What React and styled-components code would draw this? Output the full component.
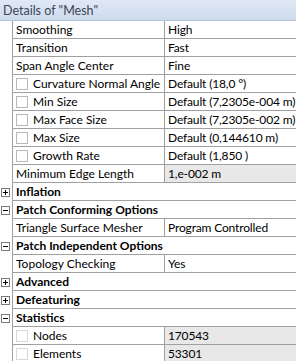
import React from 'react';
import styled, { createGlobalStyle } from 'styled-components';

const GlobalStyle = createGlobalStyle`
    body {
        margin: 0;
        background: #ffffff;
        font-family: Lato, "Noto Sans", sans-serif;
    }
`;

const rows = [
    { type: 'prop', label: 'Smoothing', value: 'High' },
    { type: 'prop', label: 'Transition', value: 'Fast' },
    { type: 'prop', label: 'Span Angle Center', value: 'Fine' },
    { type: 'prop', label: 'Curvature Normal Angle', value: 'Default (18,0 °)', check: true },
    { type: 'prop', label: 'Min Size', value: 'Default (7,2305e-004 m)', check: true },
    { type: 'prop', label: 'Max Face Size', value: 'Default (7,2305e-002 m)', check: true },
    { type: 'prop', label: 'Max Size', value: 'Default (0,144610 m)', check: true },
    { type: 'prop', label: 'Growth Rate', value: 'Default (1,850 )', check: true },
    { type: 'prop', label: 'Minimum Edge Length', value: '1,e-002 m', readOnly: true },
    { type: 'group', label: 'Inflation', open: false },
    { type: 'group', label: 'Patch Conforming Options', open: true },
    { type: 'prop', label: 'Triangle Surface Mesher', value: 'Program Controlled' },
    { type: 'group', label: 'Patch Independent Options', open: true },
    { type: 'prop', label: 'Topology Checking', value: 'Yes' },
    { type: 'group', label: 'Advanced', open: false },
    { type: 'group', label: 'Defeaturing', open: false },
    { type: 'group', label: 'Statistics', open: true },
    { type: 'prop', label: 'Nodes', value: '170543', check: true, readOnly: true, disabled: true },
    { type: 'prop', label: 'Elements', value: '53301', check: true, readOnly: true, disabled: true },
];

const Toggle = ({ open }) => (
    <svg width="9" height="9" viewBox="0 0 9 9">
        <rect x="0.5" y="0.5" width="8" height="8" fill="#fff" stroke="#7a7a7a" />
        <line x1="2" y1="4.5" x2="7" y2="4.5" stroke="#000" />
        {!open && <line x1="4.5" y1="2" x2="4.5" y2="7" stroke="#000" />}
    </svg>
);

const App = () => (
    <>
        <GlobalStyle />
        <Panel>
            <TitleBar>Details of "Mesh"</TitleBar>
            <Grid>
                {rows.map((r) =>
                    r.type === 'group' ? (
                        <Row key={r.label}>
                            <Gutter>
                                <Toggle open={r.open} />
                            </Gutter>
                            <GroupCell>{r.label}</GroupCell>
                        </Row>
                    ) : (
                        <Row key={r.label}>
                            <Gutter />
                            <LabelCell>
                                {r.check && <CheckBox $disabled={r.disabled} />}
                                {r.label}
                            </LabelCell>
                            <ValueCell $readOnly={r.readOnly}>{r.value}</ValueCell>
                        </Row>
                    )
                )}
            </Grid>
        </Panel>
    </>
);

const Panel = styled.div`
    width: 296px;
    height: 361px;
    overflow: hidden;
    display: flex;
    flex-direction: column;
    font-size: 12px;
    color: #000;
`;

const TitleBar = styled.div`
    height: 20px;
    flex: none;
    display: flex;
    align-items: center;
    padding-left: 3px;
    background: linear-gradient(#e0e9f5, #cddbed);
    border-bottom: 1px solid #b6c4d6;
    color: #3c4656;
    font-size: 12.5px;
`;

const Grid = styled.div`
    display: flex;
    flex-direction: column;
`;

const Row = styled.div`
    height: 18px;
    flex: none;
    display: grid;
    grid-template-columns: 13px 152px 1fr;
`;

const Gutter = styled.div`
    border-right: 1px solid #a0a0a0;
    display: flex;
    align-items: center;
    justify-content: center;
    padding-right: 1px;
`;

const Cell = styled.div`
    min-width: 0;
    border-bottom: 1px solid #a0a0a0;
    display: flex;
    align-items: center;
    white-space: nowrap;
    overflow: hidden;
    line-height: 17px;
`;

const LabelCell = styled(Cell)`
    padding-left: 3px;
    border-right: 1px solid #a0a0a0;
`;

const ValueCell = styled(Cell)`
    padding-left: 3px;
    letter-spacing: -0.15px;
    background: ${(p) => (p.$readOnly ? '#e8e8e8' : '#ffffff')};
`;

const GroupCell = styled(Cell)`
    grid-column: 2 / 4;
    padding-left: 3px;
    font-weight: bold;
`;

const CheckBox = styled.span`
    width: 10px;
    height: 10px;
    flex: none;
    margin-right: 5px;
    border: 1px solid ${(p) => (p.$disabled ? '#d8d8d8' : '#b8b8b8')};
    background: #fff;
`;

export default App;
